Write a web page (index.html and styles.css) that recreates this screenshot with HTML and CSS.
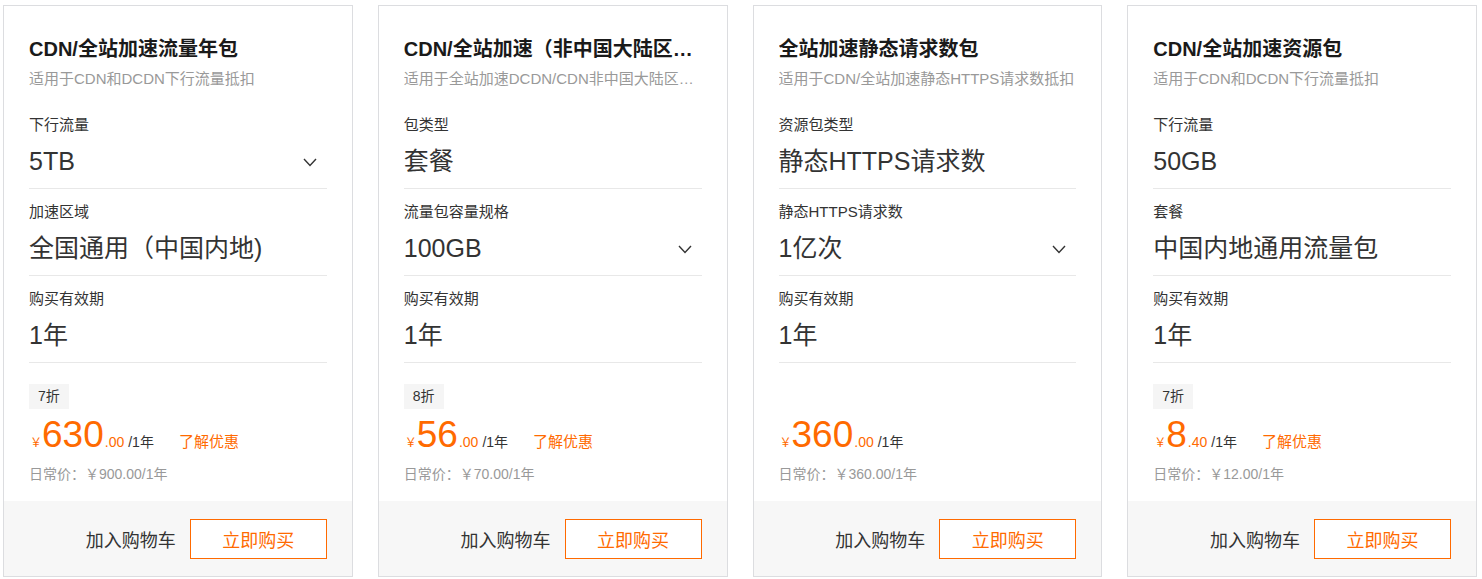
FILE: index.html
```html
<!DOCTYPE html>
<html lang="zh-CN">
<head>
  <meta charset="UTF-8">
  <title>CDN资源包</title>
  <link rel="stylesheet" href="styles.css">
</head>
<body>
  <div class="cards">

    <div class="card">
      <div class="card-body">
        <h3 class="title">CDN/全站加速流量年包</h3>
        <p class="desc">适用于CDN和DCDN下行流量抵扣</p>
        <div class="field">
          <div class="label">下行流量</div>
          <div class="value">5TB<svg class="arrow" width="14" height="9" viewBox="0 0 14 9"><polyline points="1,1 7,7.5 13,1" fill="none" stroke="#333" stroke-width="1.4"/></svg></div>
        </div>
        <div class="field">
          <div class="label">加速区域</div>
          <div class="value">全国通用（中国内地)</div>
        </div>
        <div class="field">
          <div class="label">购买有效期</div>
          <div class="value">1年</div>
        </div>
        <div class="tag-row"><span class="tag">7折</span></div>
        <div class="price">
          <span class="yen">￥</span><span class="num">630</span><span class="dec">.00</span><span class="unit">/1年</span>
          <a class="promo" href="#">了解优惠</a>
        </div>
        <div class="origin">日常价：￥900.00/1年</div>
      </div>
      <div class="card-foot">
        <button class="btn-cart">加入购物车</button>
        <button class="btn-buy">立即购买</button>
      </div>
    </div>

    <div class="card">
      <div class="card-body">
        <h3 class="title">CDN/全站加速（非中国大陆区域）流量包</h3>
        <p class="desc">适用于全站加速DCDN/CDN非中国大陆区域下行流量抵扣</p>
        <div class="field">
          <div class="label">包类型</div>
          <div class="value">套餐</div>
        </div>
        <div class="field">
          <div class="label">流量包容量规格</div>
          <div class="value">100GB<svg class="arrow" width="14" height="9" viewBox="0 0 14 9"><polyline points="1,1 7,7.5 13,1" fill="none" stroke="#333" stroke-width="1.4"/></svg></div>
        </div>
        <div class="field">
          <div class="label">购买有效期</div>
          <div class="value">1年</div>
        </div>
        <div class="tag-row"><span class="tag">8折</span></div>
        <div class="price">
          <span class="yen">￥</span><span class="num">56</span><span class="dec">.00</span><span class="unit">/1年</span>
          <a class="promo" href="#">了解优惠</a>
        </div>
        <div class="origin">日常价：￥70.00/1年</div>
      </div>
      <div class="card-foot">
        <button class="btn-cart">加入购物车</button>
        <button class="btn-buy">立即购买</button>
      </div>
    </div>

    <div class="card">
      <div class="card-body">
        <h3 class="title">全站加速静态请求数包</h3>
        <p class="desc">适用于CDN/全站加速静态HTTPS请求数抵扣</p>
        <div class="field">
          <div class="label">资源包类型</div>
          <div class="value">静态HTTPS请求数</div>
        </div>
        <div class="field">
          <div class="label">静态HTTPS请求数</div>
          <div class="value">1亿次<svg class="arrow" width="14" height="9" viewBox="0 0 14 9"><polyline points="1,1 7,7.5 13,1" fill="none" stroke="#333" stroke-width="1.4"/></svg></div>
        </div>
        <div class="field">
          <div class="label">购买有效期</div>
          <div class="value">1年</div>
        </div>
        <div class="tag-row"></div>
        <div class="price">
          <span class="yen">￥</span><span class="num">360</span><span class="dec">.00</span><span class="unit">/1年</span>
        </div>
        <div class="origin">日常价：￥360.00/1年</div>
      </div>
      <div class="card-foot">
        <button class="btn-cart">加入购物车</button>
        <button class="btn-buy">立即购买</button>
      </div>
    </div>

    <div class="card">
      <div class="card-body">
        <h3 class="title">CDN/全站加速资源包</h3>
        <p class="desc">适用于CDN和DCDN下行流量抵扣</p>
        <div class="field">
          <div class="label">下行流量</div>
          <div class="value">50GB</div>
        </div>
        <div class="field">
          <div class="label">套餐</div>
          <div class="value">中国内地通用流量包</div>
        </div>
        <div class="field">
          <div class="label">购买有效期</div>
          <div class="value">1年</div>
        </div>
        <div class="tag-row"><span class="tag">7折</span></div>
        <div class="price">
          <span class="yen">￥</span><span class="num">8</span><span class="dec">.40</span><span class="unit">/1年</span>
          <a class="promo" href="#">了解优惠</a>
        </div>
        <div class="origin">日常价：￥12.00/1年</div>
      </div>
      <div class="card-foot">
        <button class="btn-cart">加入购物车</button>
        <button class="btn-buy">立即购买</button>
      </div>
    </div>

  </div>
</body>
</html>
```

FILE: styles.css
```css
body {
  margin: 0;
  font-family: "Liberation Sans", "Noto Sans CJK SC", sans-serif;
  color: #333;
  background: #fff;
}

.cards {
  display: flex;
  gap: 25px;
  padding: 5px 5px 0 3px;
}

.card {
  flex: 1 1 0;
  min-width: 0;
  height: 572px;
  box-sizing: border-box;
  border: 1px solid #dcdde0;
  display: flex;
  flex-direction: column;
}

.card-body {
  flex: 1;
  padding: 29px 25px 0 25px;
}

.title {
  margin: 0;
  font-size: 20px;
  line-height: 28px;
  font-weight: bold;
  color: #1a1a1a;
  white-space: nowrap;
  overflow: hidden;
  text-overflow: ellipsis;
}

.desc {
  margin: 6px 0 0 0;
  font-size: 15px;
  line-height: 20px;
  color: #999;
  white-space: nowrap;
  overflow: hidden;
  text-overflow: ellipsis;
}

.field {
  padding: 13px 0 11px 0;
  border-bottom: 1px solid #e8e8e8;
}

.field:first-of-type {
  padding-top: 26px;
}

.label {
  font-size: 15px;
  line-height: 20px;
  color: #333;
}

.value {
  margin-top: 10px;
  font-size: 25px;
  line-height: 32px;
  color: #333;
  display: flex;
  justify-content: space-between;
  align-items: center;
}

.arrow {
  margin: 2px 10px 0 0;
}

.tag-row {
  height: 25px;
  margin-top: 21px;
}

.tag {
  display: inline-block;
  padding: 0 9px;
  font-size: 14px;
  line-height: 25px;
  color: #333;
  background: #f5f5f5;
}

.price {
  margin-top: 6px;
  height: 40px;
  display: flex;
  align-items: baseline;
  color: #ff6a00;
}

.yen {
  font-size: 12px;
  margin-left: 1px;
}

.num {
  font-size: 37px;
  line-height: 40px;
}

.dec {
  font-size: 14px;
  margin-left: 1px;
}

.unit {
  font-size: 14px;
  color: #333;
  margin-left: 4px;
}

.promo {
  font-size: 15px;
  color: #ff6a00;
  text-decoration: none;
  margin-left: 25px;
}

.origin {
  margin-top: 9px;
  font-size: 14px;
  line-height: 20px;
  color: #999;
}

.card-foot {
  height: 75px;
  background: #f7f7f7;
  display: flex;
  justify-content: flex-end;
  align-items: center;
  gap: 14px;
  padding: 0 25px;
}

.card-foot button {
  font-family: inherit;
  font-size: 18px;
  cursor: pointer;
}

.btn-cart {
  border: none;
  background: none;
  color: #333;
  padding: 0;
}

.btn-buy {
  width: 137px;
  height: 40px;
  border: 1px solid #ff6a00;
  background: #fff;
  color: #ff6a00;
}
```
